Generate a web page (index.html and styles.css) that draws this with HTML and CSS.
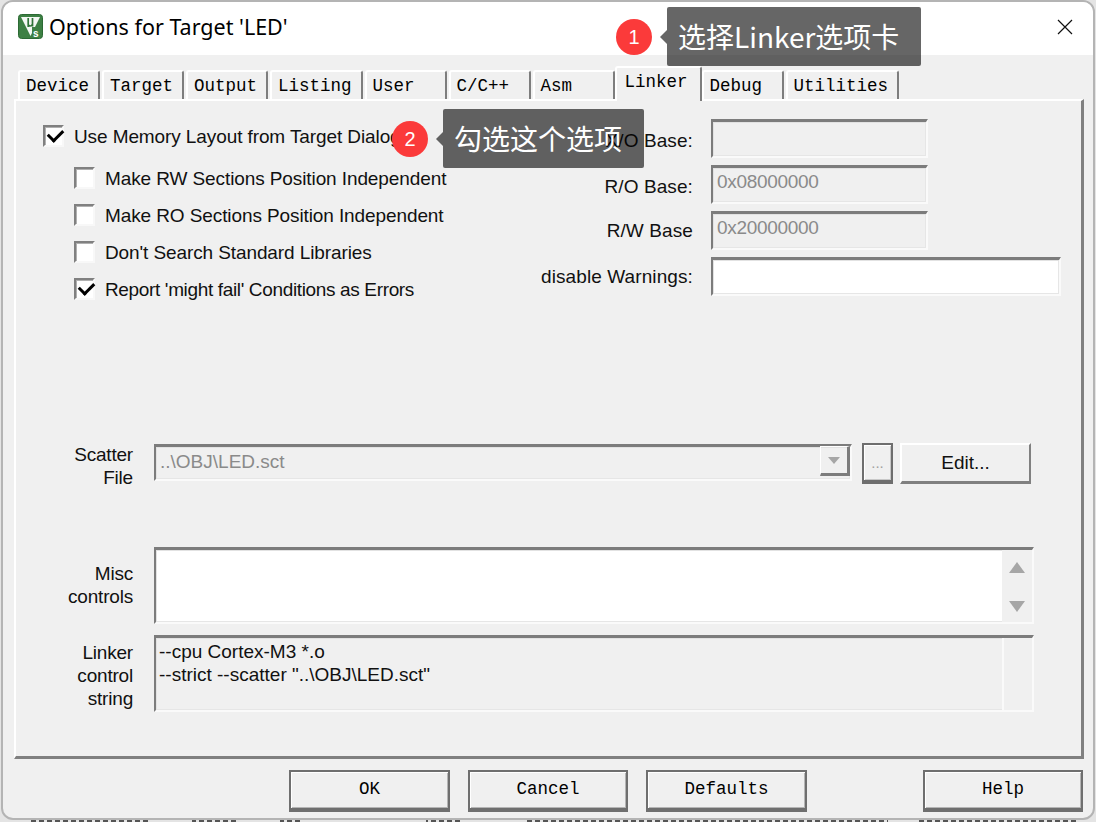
FILE: index.html
```html
<!DOCTYPE html>
<html lang="en">
<head>
<meta charset="utf-8">
<title>Options for Target 'LED'</title>
<link rel="stylesheet" href="styles.css">
</head>
<body>
<div class="window">
  <header class="titlebar">
    <svg class="app-icon" viewBox="0 0 25 25" width="25" height="25" aria-hidden="true">
      <rect x="0.5" y="0.5" width="24" height="24" rx="3" fill="#3d8044" stroke="#2c6a34"/>
      <path d="M3 3H22L12.5 22Z" fill="#f4f8f4"/>
      <path d="M10.2 4V13M10.2 10.5C10.5 12.5 13.6 12.5 14.3 10.5M14.5 4V12.4" fill="none" stroke="#2f7338" stroke-width="1.7"/>
      <rect x="14" y="13" width="9" height="10" fill="#3d8044"/>
      <text class="app-icon-s" x="15" y="22.5">s</text>
    </svg>
    <h1 class="title">Options for Target 'LED'</h1>
    <svg class="close" viewBox="0 0 16 16" width="16" height="16" aria-hidden="true">
      <path d="M1 1L15 15M15 1L1 15" stroke="#111" stroke-width="1.2" fill="none"/>
    </svg>
  </header>

  <div class="content">
    <nav class="tabs">
      <div class="tab">Device</div>
      <div class="tab">Target</div>
      <div class="tab">Output</div>
      <div class="tab">Listing</div>
      <div class="tab">User</div>
      <div class="tab">C/C++</div>
      <div class="tab">Asm</div>
      <div class="tab tab-active">Linker</div>
      <div class="tab">Debug</div>
      <div class="tab">Utilities</div>
    </nav>

    <section class="panel">
      <div class="top">
        <div class="options">
          <label class="option option-main"><span class="check check-on"></span><span class="option-text">Use Memory Layout from Target Dialog</span></label>
          <label class="option option-sub"><span class="check"></span><span class="option-text">Make RW Sections Position Independent</span></label>
          <label class="option option-sub"><span class="check"></span><span class="option-text">Make RO Sections Position Independent</span></label>
          <label class="option option-sub"><span class="check"></span><span class="option-text">Don't Search Standard Libraries</span></label>
          <label class="option option-sub"><span class="check check-on"></span><span class="option-text option-tight">Report 'might fail' Conditions as Errors</span></label>
        </div>
        <div class="bases">
          <span class="base-label base-label-low">X/O Base:</span><div class="field base-field"></div>
          <span class="base-label base-label-low">R/O Base:</span><div class="field base-field">0x08000000</div>
          <span class="base-label">R/W Base</span><div class="field base-field">0x20000000</div>
          <span class="base-label">disable Warnings:</span><div class="field field-white"></div>
        </div>
      </div>

      <div class="row row-scatter">
        <div class="row-label">Scatter<br>File</div>
        <div class="field combo">
          <span>..\OBJ\LED.sct</span>
          <span class="combo-btn"><span class="tri-down tri-small"></span></span>
        </div>
        <div class="btn-browse">...</div>
        <div class="btn-edit">Edit...</div>
      </div>

      <div class="row row-misc">
        <div class="row-label row-label-misc">Misc<br>controls</div>
        <div class="field field-white box-misc">
          <div class="box-text"></div>
          <div class="scroll"><span class="tri-up"></span><span class="tri-down"></span></div>
        </div>
      </div>

      <div class="row row-linker">
        <div class="row-label row-label-linker">Linker<br>control<br>string</div>
        <div class="field box-linker">
          <div class="box-text linker-text">--cpu Cortex-M3 *.o<br>--strict --scatter "..\OBJ\LED.sct"</div>
          <div class="scroll scroll-off"></div>
        </div>
      </div>
    </section>

    <footer class="footer">
      <div class="btn">OK</div>
      <div class="btn btn-narrow">Cancel</div>
      <div class="btn">Defaults</div>
      <div class="btn btn-narrow btn-help">Help</div>
    </footer>
  </div>

  <div class="callout callout-one">
    <span class="badge">1</span><span class="arrow"></span><span class="bubble">选择Linker选项卡</span>
  </div>
  <div class="callout callout-two">
    <span class="badge">2</span><span class="arrow"></span><span class="bubble">勾选这个选项</span>
  </div>
</div>
<div class="backdrop-text"></div>
</body>
</html>
```

FILE: styles.css
```css
* { box-sizing: border-box; }
html, body { margin: 0; height: 100%; overflow: hidden; }
body { background: #e4e4e4; font-family: "Liberation Sans", Arial, sans-serif; color: #111; }

.window {
  position: relative;
  width: 1094px;
  height: 820px;
  margin-left: 1px;
  border: 2px solid #b4b4b4;
  border-radius: 12px;
  background: #f0f0f0;
  overflow: hidden;
}

/* Fragments of the window behind the dialog, showing under its lower edge */
.backdrop-text {
  height: 2px;
  margin-left: 31px;
  width: 1046px;
  background: repeating-linear-gradient(90deg, #555 0 5px, transparent 5px 8px);
  -webkit-mask-image: linear-gradient(90deg, #000 0 119px, transparent 119px 161px, #000 161px 207px, transparent 207px 249px, #000 249px 269px, transparent 269px 395px, #000 395px 430px, transparent 430px 493px, #000 493px 857px, transparent 857px 885px, #000 885px);
  mask-image: linear-gradient(90deg, #000 0 119px, transparent 119px 161px, #000 161px 207px, transparent 207px 249px, #000 249px 269px, transparent 269px 395px, #000 395px 430px, transparent 430px 493px, #000 493px 857px, transparent 857px 885px, #000 885px);
}

.titlebar {
  display: flex;
  align-items: center;
  height: 53px;
  background: #fff;
  padding: 0 20px 4px 15px;
}
.app-icon { flex: none; }
.app-icon-s { font: bold 10px "Liberation Sans", sans-serif; fill: #fff; }
.title { margin: 0 0 0 6px; flex: 1; font: 400 21.5px "Noto Sans", "Liberation Sans", sans-serif; color: #000; }
.close { flex: none; }

.content { padding: 11px 9px 0 11px; }

.tabs { display: flex; align-items: flex-end; gap: 2px; height: 33px; padding-left: 4px; position: relative; z-index: 1; }
.tab {
  min-width: 82px;
  height: 29px;
  padding: 3px 9px 0 6px;
  border: solid #fff;
  border-width: 2px 2px 0 2px;
  border-right-color: #7d7d7d;
  border-radius: 3px 3px 0 0;
  font: 17.5px/22px "Liberation Mono", "Courier New", monospace;
  color: #000;
  white-space: nowrap;
}
.tab-active {
  height: 35px;
  margin: 0 -2px -2px;
  padding: 3px 12px 0 8px;
  background: #f0f0f0;
}

.panel {
  height: 660px;
  border: solid #fff;
  border-width: 2px 3px 3px 2px;
  border-right-color: #808080;
  border-bottom-color: #808080;
  font-size: 19px;
}

.top { display: flex; justify-content: space-between; height: 340px; }

.options { padding: 24px 0 0 27px; }
.option { display: flex; align-items: center; height: 22px; gap: 10px; letter-spacing: -0.1px; white-space: nowrap; }
.option-text { padding-top: 2px; line-height: 22px; }
.option-tight { letter-spacing: -0.35px; }
.option-sub { margin-top: 15px; margin-left: 31px; }
.option-main { margin-bottom: 20px; }
.option-main + .option-sub { margin-top: 0; }

.check {
  position: relative;
  flex: none;
  width: 21px;
  height: 22px;
  background: #fff;
  border: 2px solid;
  border-color: #808080 #f8f8f8 #f8f8f8 #808080;
  box-shadow: inset 1px 1px 0 #b0b0b0;
}
.check-on::after {
  content: "";
  position: absolute;
  left: 3px;
  top: 2px;
  width: 12px;
  height: 7px;
  border: solid #000;
  border-width: 0 0 3px 3px;
  transform: rotate(-45deg);
}

.bases {
  display: grid;
  grid-template-columns: auto 350px;
  column-gap: 18px;
  row-gap: 7px;
  align-items: center;
  align-content: start;
  padding: 18px 20px 0 0;
}
.base-field { width: 217px; letter-spacing: -0.3px; }
.base-label { text-align: right; white-space: nowrap; letter-spacing: 0.1px; }
.base-label-low { padding-top: 5px; }

.field {
  height: 39px;
  padding-left: 4px;
  border: solid;
  border-width: 3px 2px 2px 2px;
  border-color: #7c7c7c #fafafa #fafafa #7c7c7c;
  box-shadow: inset 1px 1px 0 #e2e2e2, inset -1px -1px 0 #e6e6e6;
  color: #8a8a8a;
  font-size: 19px;
  line-height: 28px;
}
.field-white { background: #fff; }

.row { display: flex; align-items: flex-start; }
.row-label { flex: none; width: 117px; margin-right: 21px; text-align: right; line-height: 23px; letter-spacing: -0.2px; }

.row-scatter { height: 106px; padding-top: 2px; }
.combo { display: flex; justify-content: space-between; width: 698px; height: 37px; margin-top: 1px; line-height: 30px; }
.combo-btn {
  display: flex;
  align-items: center;
  justify-content: center;
  width: 30px;
  height: 30px;
  margin-top: -1px;
  border: solid;
  border-width: 1px 3px 3px 1px;
  border-color: #fff #7c7c7c #7c7c7c #fff;
}
.btn-browse {
  width: 31px;
  height: 41px;
  margin-left: 10px;
  border: solid #6e6e6e;
  border-width: 2px 2px 4px 2px;
  box-shadow: inset 1px 1px 0 #fff, inset -1px -1px 0 #c8c8c8;
  color: #a0a0a0;
  text-align: center;
  line-height: 36px;
  font-size: 15px;
}
.btn-edit {
  width: 131px;
  height: 41px;
  margin-left: 7px;
  border: solid;
  border-width: 2px 2px 3px 2px;
  border-color: #fff #808080 #808080 #fff;
  text-align: center;
  line-height: 36px;
}

.row-misc { height: 88px; }
.row-label-misc { padding-top: 15px; }
.box-misc, .box-linker { display: flex; width: 880px; height: 77px; padding: 0; }
.box-text { flex: 1; }
.linker-text { padding: 2px 0 0 3px; color: #111; line-height: 23px; letter-spacing: 0; }
.scroll {
  display: flex;
  flex-direction: column;
  align-items: center;
  justify-content: space-between;
  width: 30px;
  padding: 12px 0 10px;
  background: #f0f0f0;
}
.scroll-off { border-left: 2px solid #fafafa; }
.row-label-linker { padding-top: 6px; }

.tri-up, .tri-down { width: 0; height: 0; border-left: 8px solid transparent; border-right: 8px solid transparent; }
.tri-up { border-bottom: 11px solid #a6a6a6; }
.tri-down { border-top: 11px solid #a6a6a6; }
.tri-small { border-left-width: 6px; border-right-width: 6px; border-top-width: 7px; }

.footer { display: flex; gap: 18px; padding: 11px 0 0 275px; }
.btn {
  width: 161px;
  height: 42px;
  border: solid;
  border-width: 2px 2px 4px 2px;
  border-color: #6f6f6f;
  box-shadow: inset 1px 1px 0 #fff, inset -1px -1px 0 #b5b5b5;
  text-align: center;
  font: 17.5px/35px "Liberation Mono", "Courier New", monospace;
  color: #000;
}
.btn-narrow { width: 160px; }
.btn-help { margin-left: 98px; }

.callout { position: absolute; display: flex; align-items: center; color: #fff; }
.callout-one { left: 613px; top: 5px; }
.callout-two { left: 389px; top: 107px; }
.badge {
  width: 36px;
  height: 36px;
  margin-right: 8px;
  border-radius: 50%;
  background: #fb3a3a;
  text-align: center;
  font: 20px/36px "Liberation Sans", sans-serif;
}
.arrow {
  width: 0;
  height: 0;
  border-top: 7px solid transparent;
  border-bottom: 7px solid transparent;
  border-right: 7px solid rgba(0, 0, 0, 0.6);
}
.bubble {
  height: 59px;
  padding: 0 22px 0 11px;
  border-radius: 2px;
  background: rgba(0, 0, 0, 0.6);
  font: 400 28px/59px "Noto Sans CJK SC", "Noto Sans", sans-serif;
  white-space: nowrap;
}
```
